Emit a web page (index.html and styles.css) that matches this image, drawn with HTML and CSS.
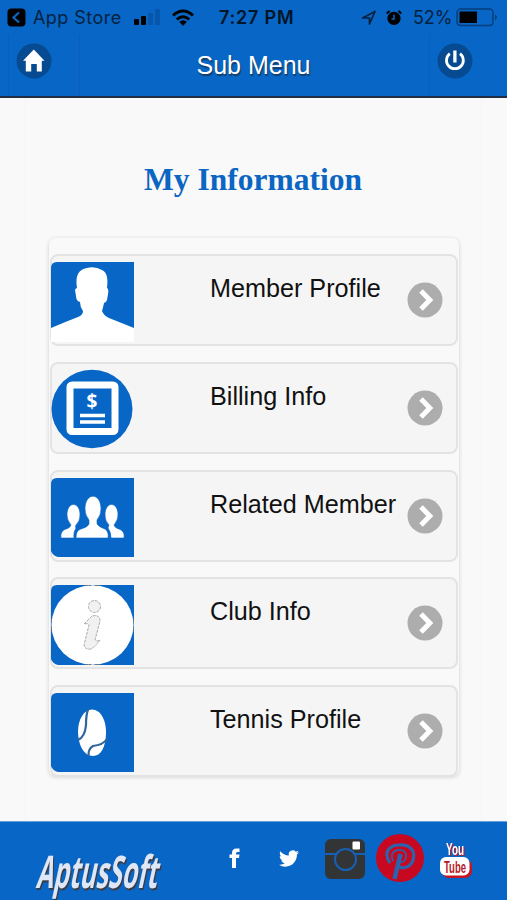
FILE: index.html
```html
<!DOCTYPE html>
<html lang="en">
<head>
<meta charset="utf-8">
<title>Sub Menu</title>
<link rel="stylesheet" href="styles.css">
</head>
<body>
<div class="app">
  <header class="header">
    <div class="status">
      <svg class="back" viewBox="0 0 20 20"><rect x=".5" y=".5" width="18" height="18" rx="4"/><path d="M12 4.500 6.500 9.500 12 14.500" fill="none" stroke="#0866c6" stroke-width="2.200"/></svg>
      <span class="store">App Store</span>
      <svg class="signal" viewBox="0 0 27 17"><rect x="0" y="10" width="5" height="6" rx="1"/><rect x="7" y="7" width="5" height="9" rx="1"/><g fill="#0656ab"><rect x="14" y="4" width="5" height="12" rx="1"/><rect x="21" y="0" width="5" height="16" rx="1"/></g></svg>
      <svg class="wifi" viewBox="0 0 24 18"><g fill="none" stroke="#000" stroke-width="3"><path d="M2 6.500Q12-2.500 22 6.500"/><path d="M5.800 10.500Q12 5 18.200 10.500"/></g><path d="M8.200 12.800Q12 9.500 15.800 12.800L12 17Z"/></svg>
      <span class="time">7:27 PM</span>
      <svg class="location" viewBox="0 0 16 16"><path d="M1.500 8 14 1.500 8.500 14V8Z" fill="none" stroke="#04223f" stroke-width="1.700" stroke-linejoin="round"/></svg>
      <svg class="alarm" viewBox="0 0 18 17"><circle cx="9" cy="9.300" r="6.600"/><path d="M1.800 4.500 4.500 2M16.200 4.500 13.500 2" stroke="#000" stroke-width="2"/><path d="M9 5.500V10H6.500" fill="none" stroke="#0866c6" stroke-width="1.500"/></svg>
      <span class="percent">52%</span>
      <svg class="battery" viewBox="0 0 42 19"><rect x="1" y="1" width="36" height="16.500" rx="3.500" fill="none" stroke="#053e7b" stroke-width="1.500"/><rect x="3.500" y="3.500" width="17.500" height="11.500"/><path d="M39 6.500Q43 9.200 39 12Z" fill="#053e7b"/></svg>
    </div>
    <div class="toolbar">
      <div class="tool home"><svg viewBox="0 0 36 36"><circle cx="18" cy="18" r="17.500" fill="#064b91"/><path d="M17.800 6.500 28.500 17.800H25.800V28.500H20.800V21H15.200V28.500H9.800V17.800H7Z" fill="#fff"/></svg></div>
      <h1>Sub Menu</h1>
      <div class="tool power"><svg viewBox="0 0 36 36"><circle cx="18" cy="18" r="17.500" fill="#064b91"/><g fill="none" stroke="#fff"><path d="M12.800 10.600A8.400 8.400 0 1 0 23 10.600" stroke-width="2.800"/><path d="M17.900 7.500V19.500" stroke-width="3.300"/></g></svg></div>
    </div>
  </header>

  <main class="page">
    <h2>My Information</h2>
    <ul class="menu">
      <li class="row">
        <svg class="thumb" viewBox="0 0 83 80"><path d="M0 80V6Q0 0 6 0H83V80Z" fill="#0866c6"/><path d="M0 80V66Q14 60 27 55Q32 53 32 49Q29 45 29 40Q25 39 25 34L24 28Q25 26 26 26Q23 8 36 6Q44 4 51 8Q58 11 56 26Q58 27 57 32L56 38Q55 41 53 41Q52 46 51 49Q53 54 58 56L83 66V80Z" fill="#fff"/></svg>
        <span class="label">Member Profile</span>
        <svg class="arrow" viewBox="0 0 36 36"><circle cx="18" cy="18" r="17.500"/><path d="M14 9 22.800 18 14 27"/></svg>
      </li>
      <li class="row">
        <svg class="thumb" viewBox="0 0 83 80"><ellipse cx="41" cy="39" rx="40.500" ry="39.200" fill="#0866c6"/><rect x="19" y="15" width="45" height="46.500" rx="2" fill="none" stroke="#fff" stroke-width="7"/><text x="41" y="37.500" class="dollar">$</text><path d="M29 45.500H54M29 52H54" stroke="#fff" stroke-width="3.600"/></svg>
        <span class="label">Billing Info</span>
        <svg class="arrow" viewBox="0 0 36 36"><circle cx="18" cy="18" r="17.500"/><path d="M14 9 22.800 18 14 27"/></svg>
      </li>
      <li class="row">
        <svg class="thumb" viewBox="0 0 83 80"><path d="M6 0H83V79H7Q2 78 0 73V6Q0 0 6 0Z" fill="#0866c6"/><g fill="#fff" stroke="#0866c6" stroke-width=".6"><path d="M25 60Q25 52 30 51Q37 49 38 46V42Q34 37 34 31C34 14 50 14 50 31Q50 37 46 42V46Q48 49 54 51Q58 54 57 60Z"/><path d="M10 60Q9 53 15 51Q19 50 20 47Q16 42 16 37C16 23 29 23 29 37Q29 43 25 47Q24 49 25 50Q22 54 23 60Z"/><path d="M73 60Q74 53 68 51Q64 50 63 47Q67 42 67 37C67 23 54 23 54 37Q54 43 58 47L57 50Q60 54 60 60Z"/></g></svg>
        <span class="label">Related Member</span>
        <svg class="arrow" viewBox="0 0 36 36"><circle cx="18" cy="18" r="17.500"/><path d="M14 9 22.800 18 14 27"/></svg>
      </li>
      <li class="row">
        <svg class="thumb" viewBox="0 0 83 80"><path d="M6 0H83V80H7Q2 79 0 74V6Q0 0 6 0Z" fill="#0866c6"/><ellipse cx="41.500" cy="40" rx="41" ry="39.800" fill="#fff"/><path d="M34 .5H40M44 .5H49M34 79.500H40M44 79.500H49M.5 34V38M.5 42V47M82.500 34V38M82.500 42V47" stroke="#777" stroke-dasharray="3 1"/><g fill="#f1f1f1" stroke="#aaa" stroke-width="1" stroke-dasharray="3 1"><circle cx="43.500" cy="21.500" r="6"/><path d="M33 39 41 31Q49 29 49 36L44 55Q45 57 49 55Q45 61 40 64Q34 65 33 60L38 40Q38 38 33 39Z"/></g></svg>
        <span class="label">Club Info</span>
        <svg class="arrow" viewBox="0 0 36 36"><circle cx="18" cy="18" r="17.500"/><path d="M14 9 22.800 18 14 27"/></svg>
      </li>
      <li class="row">
        <svg class="thumb" viewBox="0 0 83 80"><path d="M6 0H83V79H7Q2 78 0 73V6Q0 0 6 0Z" fill="#0866c6"/><path d="M41 16.500C50 16.500 55.500 28 55 41C54.500 54 50 63 42 63C33 63 27.500 53 27 39C27 26 33 16.500 41 16.500Z" fill="#fff"/><path d="M37 16.500Q35 22 35 32Q34 44 27 47M37.500 63Q37 56 42 53Q52 52 56 46" fill="none" stroke="#32639a" stroke-width="2.200"/></svg>
        <span class="label">Tennis Profile</span>
        <svg class="arrow" viewBox="0 0 36 36"><circle cx="18" cy="18" r="17.500"/><path d="M14 9 22.800 18 14 27"/></svg>
      </li>
    </ul>
  </main>

  <footer class="footer">
    <svg class="brand" viewBox="0 0 134 52"><text class="brand-text" transform="translate(1.500 36.500) skewX(-12)" textLength="121" lengthAdjust="spacingAndGlyphs">AptusSoft</text></svg>
    <svg class="facebook" viewBox="0 0 12 20"><path d="M3 20V10H.5V6.500H3V5Q3 .5 7.500.5H10.500V4H8.500Q7 4 7 5.500V6.500H10.500L10 10H7V20Z" fill="#fff"/></svg>
    <svg class="twitter" viewBox="0 0 24 24"><path d="M23.950 4.570a10 10 0 0 1-2.820.77 4.960 4.960 0 0 0 2.160-2.720c-.95.550-2 .960-3.130 1.180a4.920 4.920 0 0 0-8.380 4.480C7.690 8.100 4.070 6.130 1.640 3.160a4.820 4.820 0 0 0-.67 2.480c0 1.710.87 3.210 2.190 4.100a4.900 4.900 0 0 1-2.230-.620v.060a4.920 4.920 0 0 0 3.950 4.830 5 5 0 0 1-2.210.080 4.940 4.940 0 0 0 4.600 3.420A9.870 9.870 0 0 1 0 19.540a13.990 13.990 0 0 0 7.550 2.210c9.050 0 14-7.500 14-13.980v-.640a10 10 0 0 0 2.400-2.560Z" fill="#fff"/></svg>
    <svg class="instagram" viewBox="0 0 40 40"><rect width="40" height="40" rx="6" fill="#333436"/><g fill="none" stroke="#1560b3" stroke-width="2"><path d="M0 15H11M30 15H40"/><circle cx="20.500" cy="20.500" r="10.500"/></g><rect x="27.500" y="2.500" width="7.500" height="8" rx="1" fill="#fff"/></svg>
    <svg class="pinterest" viewBox="0 0 48 48"><circle cx="24" cy="24" r="24" fill="#c70820"/><g fill="none" stroke="#2b64ad"><path d="M14 29C6 17 15 11 23 11C34 10 39 17 37.500 24C36 33 27 36 22 32" stroke-width="3.200"/><path d="M17 27C13 18 20 15.500 25 16C31 17 31 22 29 26C28 28 25 29 23.500 27" stroke-width="1.600"/><path d="M24.500 20 18.500 45" stroke-width="4.500"/></g></svg>
    <svg class="youtube" viewBox="0 0 34 38"><rect x="3" y="17" width="30" height="19" rx="7" fill="#c41520"/><rect x="1" y="15" width="29.500" height="18.500" rx="6" fill="#fff"/><text class="you" x="7" y="12.800" textLength="18" lengthAdjust="spacingAndGlyphs">You</text><text class="tube" x="5" y="30.500" textLength="22" lengthAdjust="spacingAndGlyphs">Tube</text></svg>
  </footer>
</div>
</body>
</html>
```

FILE: styles.css
```css
* { box-sizing: border-box; }
body { margin: 0; font-family: "Liberation Sans", Arial, sans-serif; background: #f9f9f9; }
svg { display: block; flex: none; overflow: visible; }
.app { width: 507px; height: 900px; display: flex; flex-direction: column; overflow: hidden; }
.header { height: 98px; background: #0866c6; border-bottom: 2px solid #202d42; flex: none; }
.status { height: 35px; display: flex; align-items: center; padding-left: 7px; font: 18px/35px Inter, sans-serif; color: #04223f; white-space: nowrap; }
.back { width: 20px; height: 20px; }
.store { width: 100px; padding-left: 6px; letter-spacing: .45px; }
.signal { width: 27px; height: 17px; margin-left: 7px; }
.wifi { width: 24px; height: 18px; margin-left: 10px; }
.time { width: 80px; margin-left: 24px; font-weight: 600; color: #021527; letter-spacing: .8px; }
.location { width: 16px; height: 16px; margin-left: 62px; }
.alarm { width: 18px; height: 17px; margin-left: 8px; }
.percent { width: 39px; margin-left: 10px; letter-spacing: -.1px; }
.battery { width: 42px; height: 19px; margin-left: 4px; }
.toolbar { display: grid; grid-template-columns: 72px 1fr 72px; height: 61px; padding: 0 6px 0 8px; }
.tool { padding: 8px 0 0 7px; }
.home { border-left: 1px solid #0a60b9; border-right: 1px solid #0a60b9; }
.power { border-left: 1px solid #0a60b9; }
.tool svg { width: 36px; height: 36px; }
.toolbar h1 { margin: 0; font-size: 25px; font-weight: 400; line-height: 60px; color: #fff; text-align: center; text-shadow: 1px 2px 1px #163c66; padding-right: 2px; }
.page { height: 723px; margin: 0 25px; padding: 63px 23px 0 24px; border: solid #f5f5f5; border-width: 0 1px; flex: none; }
.page h2 { margin: 0 0 0 -2px; height: 77px; font: bold 31.500px/38px "Liberation Serif", serif; color: #0b65c2; text-align: center; }
.menu { list-style: none; margin: 0 -1px; padding: 16px 1px 0; width: 410px; height: 538px; display: flex; flex-direction: column; gap: 15.750px; border-radius: 7px; box-shadow: 0 1px 4px #cfcfcf; }
.row { height: 92px; flex: none; display: flex; align-items: flex-start; background: #f5f5f5; border: 2px solid #e3e3e3; border-radius: 8px; }
.thumb { width: 83px; height: 80px; margin: 6px 0 0 -1px; }
.label { width: 198px; margin-left: 76px; padding-top: 17px; font-size: 25.200px; line-height: 30px; color: #111; white-space: nowrap; }
.arrow { width: 36px; height: 36px; margin: 26px 0 0 -1px; fill: #adadad; }
.arrow path { fill: none; stroke: #fff; stroke-width: 5; }
.dollar { font: bold 19px "Noto Sans", sans-serif; fill: #fff; text-anchor: middle; }
.footer { height: 79px; flex: none; display: flex; align-items: flex-start; background: #0866c6; border-top: 1px solid #65a0dc; }
.brand { width: 134px; height: 52px; margin: 29px 0 0 34px; filter: drop-shadow(1px 2px 0 #3a3d46); }
.brand-text { font: bold 45px "Open Sans", sans-serif; fill: #dfe6f5; }
.facebook { width: 12px; height: 20px; margin: 26px 0 0 61px; }
.twitter { width: 20px; height: 21px; margin: 26px 0 0 38px; }
.instagram { width: 40px; height: 40px; margin: 17px 0 0 26px; }
.pinterest { width: 48px; height: 48px; margin: 12px 0 0 11px; }
.youtube { width: 34px; height: 38px; margin: 20px 0 0 15px; }
.you, .tube { font: bold 17px "Liberation Sans", sans-serif; fill: #b71925; }
.you { fill: #fff; filter: drop-shadow(1px 1px 0 #c41520); }
```
